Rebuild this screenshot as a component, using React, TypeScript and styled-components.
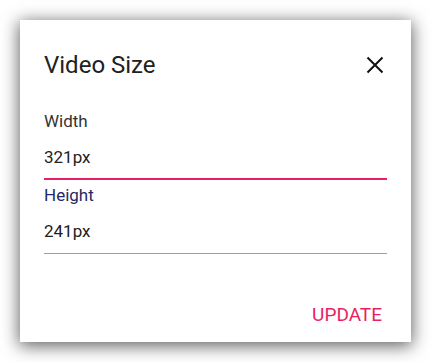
import styled, { createGlobalStyle } from 'styled-components'

const GlobalStyle = createGlobalStyle`
  html, body {
    margin: 0;
    padding: 0;
    background: #ffffff;
  }
  body {
    font-family: Roboto, "Liberation Sans", Arial, sans-serif;
  }
`

const Page = styled.div`
  width: 432px;
  height: 362px;
  padding: 20px 0 0 20px;
  box-sizing: border-box;
`

const Dialog = styled.div`
  width: 391px;
  height: 322px;
  box-sizing: border-box;
  background: #ffffff;
  box-shadow: 0 3px 16px 1px rgba(0, 0, 0, 0.62);
  padding: 29px 24px 9px 24px;
  display: flex;
  flex-direction: column;
`

const Header = styled.div`
  display: flex;
  align-items: center;
  justify-content: space-between;
  height: 32px;
`

const Title = styled.h2`
  margin: 0;
  font-size: 24px;
  line-height: 32px;
  font-weight: 400;
  color: #212121;
`

const CloseButton = styled.button`
  width: 24px;
  height: 24px;
  padding: 0;
  border: 0;
  background: none;
  display: flex;
  align-items: center;
  justify-content: center;
  color: #111111;
`

const Fields = styled.div`
  display: flex;
  flex-direction: column;
  gap: 3px;
  margin-top: 28px;
`

const Field = styled.label<{ $focused?: boolean }>`
  display: flex;
  flex-direction: column;
  padding-bottom: ${(props) => (props.$focused ? 9 : 10)}px;
  border-bottom: ${(props) => (props.$focused ? '2px solid #e91e63' : '1px solid #9e9e9e')};
`

const FieldLabel = styled.span<{ $active?: boolean }>`
  font-size: 17px;
  line-height: 24px;
  color: ${(props) => (props.$active ? '#232a66' : '#333333')};
`

const FieldValue = styled.span`
  margin-top: 12px;
  font-size: 17px;
  line-height: 24px;
  color: #212121;
`

const Footer = styled.div`
  margin-top: auto;
  display: flex;
  justify-content: flex-end;
`

const TextButton = styled.button`
  border: 0;
  background: none;
  padding: 0 5px;
  height: 36px;
  font-family: Roboto, "Liberation Sans", Arial, sans-serif;
  font-size: 19px;
  font-weight: 400;
  line-height: 36px;
  color: #e91e63;
  text-transform: uppercase;
`

const CloseIcon = () => (
  <svg width='18' height='18' viewBox='0 0 18 18' fill='none'>
    <path d='M1.5 1.5L16.5 16.5M16.5 1.5L1.5 16.5' stroke='currentColor' strokeWidth='2' />
  </svg>
)

export default function App() {
  return (
    <>
      <GlobalStyle />
      <Page>
        <Dialog>
          <Header>
            <Title>Video Size</Title>
            <CloseButton aria-label='Close'>
              <CloseIcon />
            </CloseButton>
          </Header>
          <Fields>
            <Field $focused>
              <FieldLabel>Width</FieldLabel>
              <FieldValue>321px</FieldValue>
            </Field>
            <Field>
              <FieldLabel $active>Height</FieldLabel>
              <FieldValue>241px</FieldValue>
            </Field>
          </Fields>
          <Footer>
            <TextButton>Update</TextButton>
          </Footer>
        </Dialog>
      </Page>
    </>
  )
}
